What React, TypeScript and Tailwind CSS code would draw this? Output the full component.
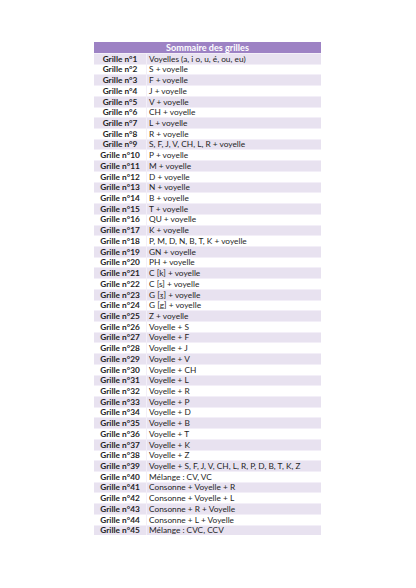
const rows: string[] = [
  "Voyelles (a, i o, u, é, ou, eu)",
  "S + voyelle",
  "F + voyelle",
  "J + voyelle",
  "V + voyelle",
  "CH + voyelle",
  "L + voyelle",
  "R + voyelle",
  "S, F, J, V, CH, L, R + voyelle",
  "P + voyelle",
  "M + voyelle",
  "D + voyelle",
  "N + voyelle",
  "B + voyelle",
  "T + voyelle",
  "QU + voyelle",
  "K + voyelle",
  "P, M, D, N, B, T, K + voyelle",
  "GN + voyelle",
  "PH + voyelle",
  "C [k] + voyelle",
  "C [s] + voyelle",
  "G [ʒ] + voyelle",
  "G [g] + voyelle",
  "Z + voyelle",
  "Voyelle + S",
  "Voyelle + F",
  "Voyelle + J",
  "Voyelle + V",
  "Voyelle + CH",
  "Voyelle + L",
  "Voyelle + R",
  "Voyelle + P",
  "Voyelle + D",
  "Voyelle + B",
  "Voyelle + T",
  "Voyelle + K",
  "Voyelle + Z",
  "Voyelle + S, F, J, V, CH, L, R, P, D, B, T, K, Z",
  "Mélange : CV, VC",
  "Consonne + Voyelle + R",
  "Consonne + Voyelle + L",
  "Consonne + R + Voyelle",
  "Consonne + L + Voyelle",
  "Mélange : CVC, CCV",
];

export default function App() {
  return (
    <div className="h-[588px] w-[416px] bg-white pt-[42px] pl-[94px] font-['Lato',sans-serif] text-[#1f1f1f]">
      <div className="w-[227px]">
        <div className="flex h-[11px] items-center justify-center bg-[#9d82c4] text-[9.1px] font-bold leading-none text-white">
          Sommaire des grilles
        </div>
        {rows.map((r, i) => (
          <div
            key={i}
            className={
              "flex h-[10.73px] items-center border-t border-[#f3eff8] text-[8.3px] leading-none " +
              (i % 2 === 0 ? "bg-[#e8e2f0]" : "bg-white")
            }
          >
            <div className="w-[52px] text-center font-bold">Grille n°{i + 1}</div>
            <div className="h-full w-px bg-[#f3eff8]" />
            <div className="pl-[2px] whitespace-nowrap">{r}</div>
          </div>
        ))}
      </div>
    </div>
  );
}
